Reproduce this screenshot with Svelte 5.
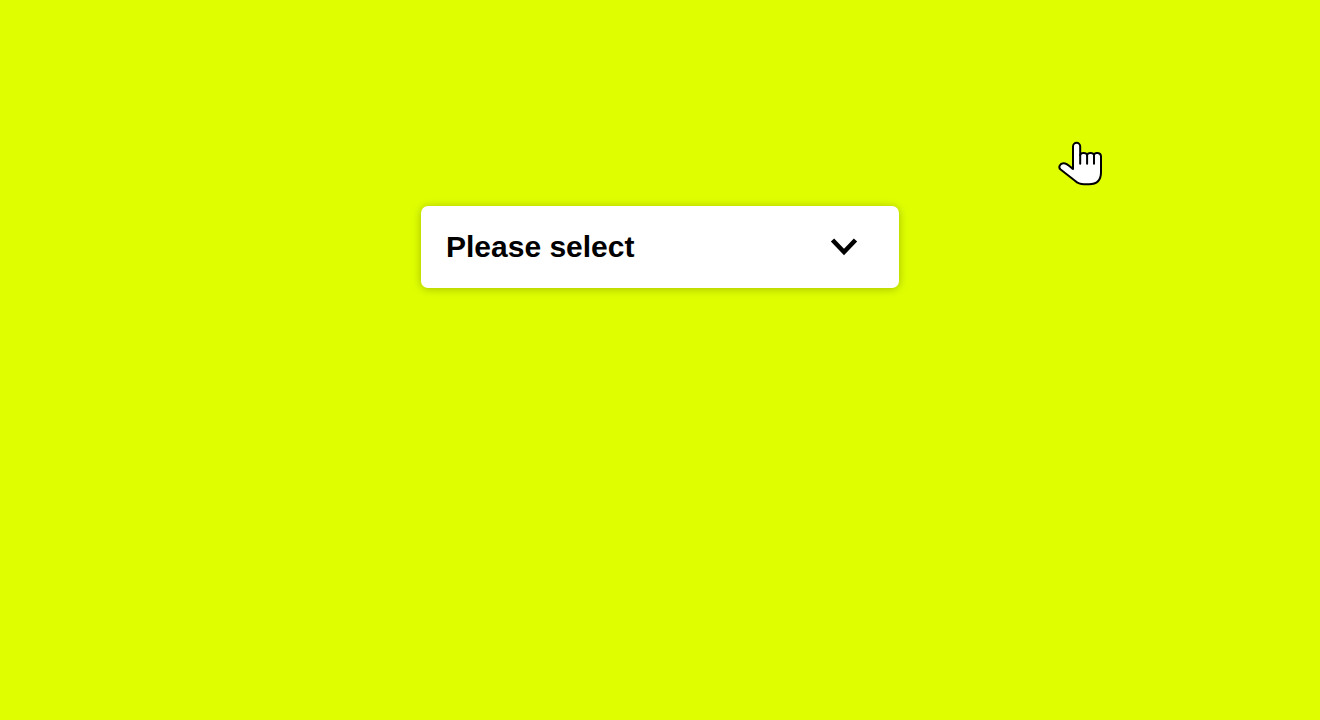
<script>
  let selected = $state('');
</script>

<main>
  <div class="field">
    <select aria-label="Please select" bind:value={selected}>
      <option value="">Please select</option>
    </select>
    <svg class="chevron" viewBox="0 0 28 20" aria-hidden="true">
      <path d="M2.5 3 14 15 25.500 3" />
    </svg>
  </div>
  <svg class="pointer" viewBox="0 0 48 48" aria-hidden="true">
    <path d="M17 28V5.400a3.600 3.600 0 0 1 7.200 0V14c.6-2.800 6.300-2.800 6.900 0 .6-2.800 6.300-2.800 6.900 0 .6-2.800 7-2.800 7 1.500V31c0 8-4.500 12.300-12 12.300h-5c-4.200 0-6.600-1.300-9-3.500L4.600 28.500C2 26.200 3.800 22.500 7.500 22.300c3.500-.1 6.500 3.300 9.500 5.700" />
    <path d="M24.200 14v8.800M31.100 14v8.800M38 14v8.800" />
  </svg>
</main>

<style>
  :global(body) {
    margin: 0;
    background: #dfff00;
  }
  main {
    position: relative;
    box-sizing: border-box;
    min-height: 100vh;
    padding: 206px 24px 24px;
    font-family: "Liberation Sans", Arial, sans-serif;
  }
  .field {
    display: grid;
    align-items: center;
    max-width: 478px;
    margin: 0 auto;
    border-radius: 7px;
    background: #fff;
    box-shadow: 0 1px 10px rgb(0 0 0 / 26%);
  }
  select {
    grid-area: 1 / 1;
    appearance: none;
    width: 100%;
    height: 82px;
    margin: 0;
    padding: 0 80px 0 25px;
    border: 0;
    border-radius: 7px;
    background: transparent;
    color: #000;
    font: bold 30px/36px "Liberation Sans", Arial, sans-serif;
    cursor: pointer;
  }
  .chevron {
    grid-area: 1 / 1;
    justify-self: end;
    width: 28px;
    height: 20px;
    margin-right: 41px;
    pointer-events: none;
    fill: none;
    stroke: #000;
    stroke-width: 4.6;
  }
  .pointer {
    position: absolute;
    top: 141px;
    left: calc(50% + 396px);
    width: 48px;
    height: 48px;
    fill: #fff;
    stroke: #000;
    stroke-width: 2;
    stroke-linejoin: round;
    stroke-linecap: round;
    pointer-events: none;
  }
</style>
